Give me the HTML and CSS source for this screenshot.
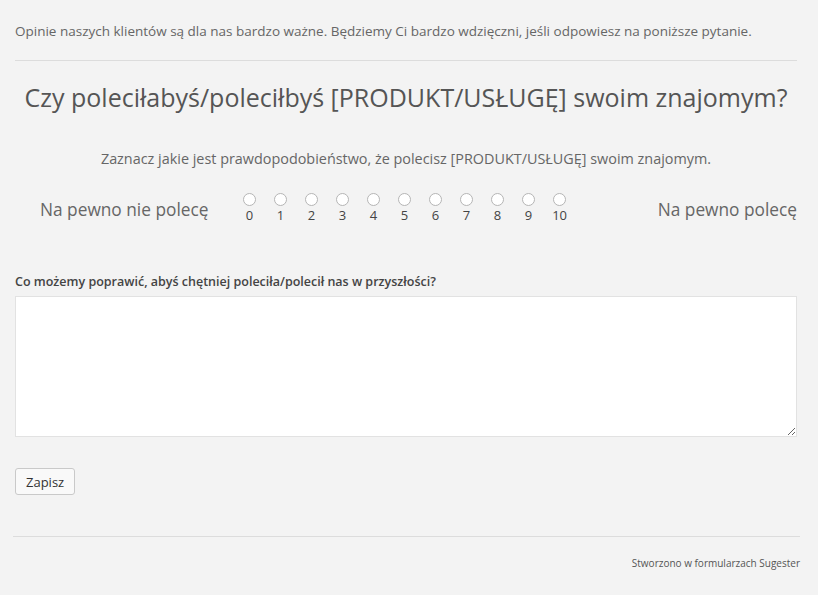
FILE: index.html
```html
<!DOCTYPE html>
<html lang="pl">
<head>
<meta charset="utf-8">
<title>Ankieta</title>
<link rel="stylesheet" href="styles.css">
</head>
<body>
<div class="page">
  <p class="intro">Opinie naszych klientów są dla nas bardzo ważne. Będziemy Ci bardzo wdzięczni, jeśli odpowiesz na poniższe pytanie.</p>
  <hr class="rule">
  <h1 class="title">Czy poleciłabyś/poleciłbyś [PRODUKT/USŁUGĘ] swoim znajomym?</h1>
  <p class="sub">Zaznacz jakie jest prawdopodobieństwo, że polecisz [PRODUKT/USŁUGĘ] swoim znajomym.</p>
  <div class="scale">
    <span class="end-label left">Na pewno nie polecę</span>
    <div class="options">
      <label class="opt"><input type="radio" name="nps"><span>0</span></label>
      <label class="opt"><input type="radio" name="nps"><span>1</span></label>
      <label class="opt"><input type="radio" name="nps"><span>2</span></label>
      <label class="opt"><input type="radio" name="nps"><span>3</span></label>
      <label class="opt"><input type="radio" name="nps"><span>4</span></label>
      <label class="opt"><input type="radio" name="nps"><span>5</span></label>
      <label class="opt"><input type="radio" name="nps"><span>6</span></label>
      <label class="opt"><input type="radio" name="nps"><span>7</span></label>
      <label class="opt"><input type="radio" name="nps"><span>8</span></label>
      <label class="opt"><input type="radio" name="nps"><span>9</span></label>
      <label class="opt"><input type="radio" name="nps"><span>10</span></label>
    </div>
    <span class="end-label right">Na pewno polecę</span>
  </div>
  <label class="q-label" for="improve">Co możemy poprawić, abyś chętniej poleciła/polecił nas w przyszłości?</label>
  <textarea id="improve" class="answer"></textarea>
  <button class="save" type="button">Zapisz</button>
</div>
<footer class="footer">
  <hr class="rule foot-rule">
  <p class="credit">Stworzono w formularzach Sugester</p>
</footer>
</body>
</html>
```
FILE: styles.css
```css
html, body {
  margin: 0;
  padding: 0;
  background: #f3f3f3;
  font-family: "Open Sans", "Noto Sans", sans-serif;
  color: #555;
}
.page {
  padding: 0 21px 0 15px;
}
.intro {
  margin: 0;
  padding-top: 21px;
  font-size: 13.5px;
  line-height: 20px;
  color: #666;
}
.rule {
  border: 0;
  border-top: 1px solid #dcdcdc;
  margin: 0;
  height: 0;
}
.page .rule {
  margin-top: 19px;
}
.title {
  margin: 18px 0 0;
  text-align: center;
  font-size: 25px;
  font-weight: 400;
  line-height: 36px;
  color: #555;
}
.sub {
  margin: 34px 0 0;
  text-align: center;
  font-size: 14.4px;
  line-height: 20px;
  color: #666;
}
.scale {
  display: flex;
  align-items: center;
  justify-content: space-between;
  margin-top: 24px;
}
.end-label {
  font-size: 17.3px;
  color: #666;
  padding-top: 3px;
}
.end-label.left {
  margin-left: 25px;
}
.options {
  display: flex;
  margin-left: 5px;
  margin-right: 62px;
}
.opt {
  display: flex;
  flex-direction: column;
  align-items: center;
  width: 31px;
}
.opt input {
  appearance: none;
  -webkit-appearance: none;
  width: 13px;
  height: 13px;
  margin: 0;
  border: 1px solid #b5b5b5;
  border-radius: 50%;
  background: #fff;
}
.opt span {
  font-size: 13px;
  line-height: 16px;
  margin-top: 1px;
  color: #444;
}
.q-label {
  display: block;
  margin-top: 50px;
  font-size: 12.5px;
  font-weight: 600;
  line-height: 18px;
  color: #444;
}
.answer {
  display: block;
  box-sizing: border-box;
  width: 100%;
  height: 141px;
  margin-top: 5px;
  border: 1px solid #e2e2e2;
  background: #fff;
  resize: vertical;
  font-family: inherit;
}
.save {
  display: block;
  margin-top: 31px;
  height: 27px;
  padding: 0 10px;
  border: 1px solid #c9c9c9;
  border-radius: 3px;
  background: #f9f9f9;
  font-family: inherit;
  font-size: 13px;
  color: #333;
}
.footer {
  padding: 0 18px 0 13px;
}
.foot-rule {
  margin-top: 41px;
}
.credit {
  margin: 18px 0 0;
  text-align: right;
  font-size: 10px;
  line-height: 16px;
  color: #555;
}
```
